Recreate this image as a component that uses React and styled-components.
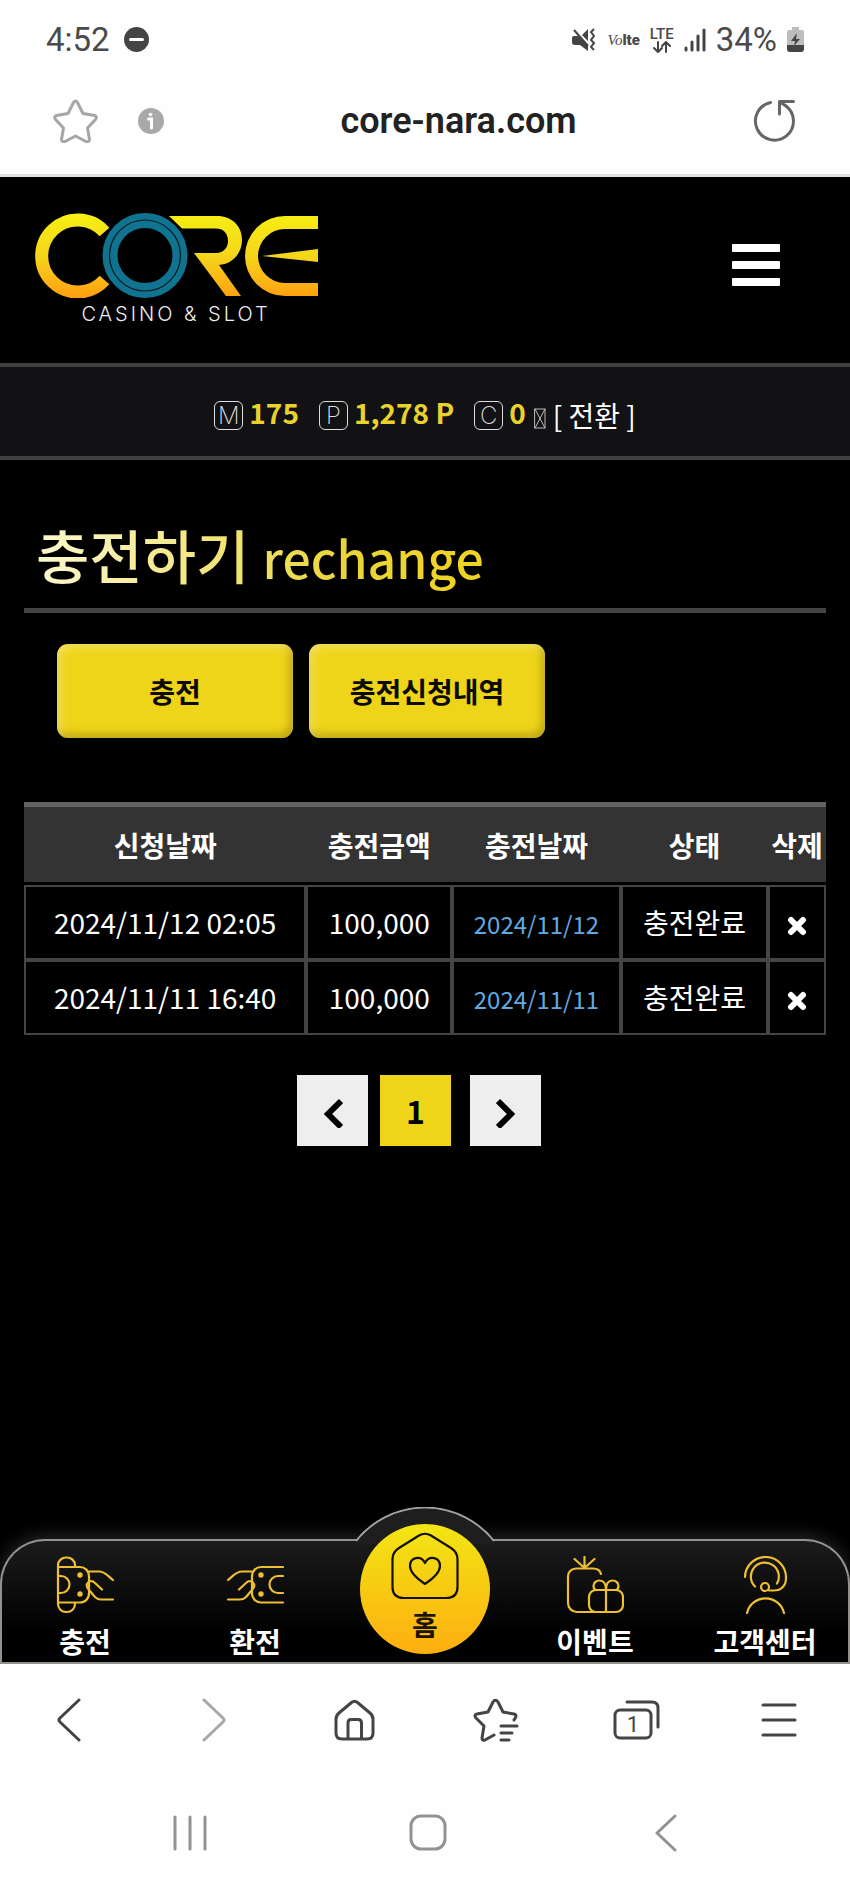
/* RechargeHistoryPage — 충전 신청내역. 모바일 브라우저 틀 안에
   사이트 헤더, 보유 금액 바, 신청내역 표, 하단 메뉴를 그린다. */

import React from "react";
import styled, { createGlobalStyle, css } from "styled-components";

const GlobalStyle = createGlobalStyle`
  * {
    box-sizing: border-box;
  }

  body {
    margin: 0;
    background: #000;
    font-family: "Noto Sans CJK KR", "Noto Sans", sans-serif;
  }

  button {
    margin: 0;
    padding: 0;
    border: none;
    background: none;
    font-family: inherit;
    cursor: pointer;
  }

  a {
    color: inherit;
    text-decoration: none;
  }

  svg {
    display: block;
  }
`;

const Screen = styled.div`
  min-height: 100vh;
  display: flex;
  flex-direction: column;
  background: #000;
`;

/* ---------- 상태바 / 주소창 ---------- */

const StatusBar = styled.div`
  height: 79px;
  padding: 0 46px;
  display: flex;
  align-items: center;
  justify-content: space-between;
  background: #fefefe;
  color: #4a4a4a;
  font-family: Roboto, sans-serif;
`;

const StatusGroup = styled.div`
  display: flex;
  align-items: center;
  gap: ${({ $gap }) => $gap}px;
`;

const StatusText = styled.span`
  font-size: 33px;
  line-height: 40px;
`;

const VoLte = styled.span`
  display: flex;
  align-items: baseline;
  font-size: 15px;
  line-height: 20px;
  font-weight: 900;

  i {
    font-family: "Liberation Serif", serif;
    font-weight: 400;
  }
`;

const Lte = styled.span`
  display: flex;
  flex-direction: column;
  align-items: center;
  font-size: 15px;
  line-height: 14px;
  font-weight: 500;
`;

const AddressBar = styled.div`
  padding: 20px 53px 31px;
  display: flex;
  align-items: center;
  background: #fefefe;
  border-bottom: 3px solid #e2e2e2;
`;

const InfoButton = styled.button`
  margin-left: 40px;
`;

const Address = styled.div`
  flex: 1;
  text-align: center;
  font-family: Roboto, sans-serif;
  font-size: 36px;
  font-weight: 600;
  line-height: 41px;
  color: #222;
`;

/* ---------- 사이트 헤더 ---------- */

const Header = styled.header`
  padding: 36px 70px 39px 34px;
  display: flex;
  align-items: flex-start;
  justify-content: space-between;
`;

const Logo = styled.a`
  display: flex;
  flex-direction: column;
  align-items: center;
  gap: 6px;
`;

const LogoSub = styled.span`
  font-family: Inter, "Liberation Sans", sans-serif;
  font-size: 20px;
  font-weight: 300;
  line-height: 20px;
  letter-spacing: 3px;
  color: #eee;
`;

const MenuButton = styled.button`
  width: 48px;
  height: 42px;
  margin-top: 31px;
  display: flex;
  flex-direction: column;
  justify-content: space-between;

  span {
    width: 100%;
    height: 8px;
    border-radius: 1px;
    background: #fff;
  }
`;

const BalanceBar = styled.div`
  padding: 31px 20px 24px;
  display: flex;
  align-items: center;
  justify-content: center;
  background: #121114;
  border-top: 4px solid #3f3e41;
  border-bottom: 4px solid #3f3e41;
  line-height: 28px;
`;

const Balance = styled.div`
  display: flex;
  align-items: center;
  gap: 6px;
  margin-right: 20px;
`;

const BalanceMark = styled.span`
  width: 29px;
  height: 29px;
  border: 1px solid #ddd;
  border-radius: 6px;
  display: flex;
  align-items: center;
  justify-content: center;
  font-family: Inter, sans-serif;
  font-size: 24px;
  font-weight: 200;
  line-height: 27px;
  color: #ddd;
`;

const BalanceValue = styled.strong`
  padding-bottom: 6px;
  font-size: 28px;
  font-weight: 700;
  line-height: 28px;
  color: #ead22c;
`;

const ConvertButton = styled.button`
  margin-left: -12px;
  display: flex;
  align-items: center;
  gap: 7px;
  font-size: 28px;
  line-height: 34px;
  color: #fff;

  svg {
    margin-top: 6px;
  }
`;

/* ---------- 본문 ---------- */

const Main = styled.main`
  flex: 1;
  padding: 50px 24px 40px;
`;

const PageTitle = styled.h1`
  margin: 0;
  padding: 0 12px 10px;
  border-bottom: 5px solid #444;
  font-size: 58px;
  font-weight: 500;
  line-height: 88px;

  span {
    background: linear-gradient(to right, #fdf8d0, #ead535 70%, #efd321);
    background-clip: text;
    -webkit-background-clip: text;
    color: transparent;
  }

  small {
    font-size: 50px;
    line-height: 50px;
  }
`;

const Tabs = styled.div`
  display: flex;
  gap: 16px;
  padding: 31px 33px 0;
`;

const TabButton = styled.button`
  flex: 0 1 236px;
  height: 94px;
  border-radius: 11px;
  background: #efd51a;
  box-shadow:
    inset 3px 3px 8px rgba(255, 255, 255, 0.35),
    inset -3px -4px 8px rgba(130, 110, 0, 0.5);
  font-size: 28px;
  font-weight: 700;
  color: #0c0b02;
`;

const HistoryTable = styled.table`
  width: 100%;
  margin-top: 64px;
  border-spacing: 0;
  table-layout: fixed;
  color: #fff;
  font-size: 28px;
  line-height: 40px;
  text-align: center;
`;

const HeadCell = styled.th`
  width: ${({ $width }) => $width};
  height: 80px;
  padding: 0;
  background: #333;
  border-top: 5px solid #636363;
  font-weight: 700;
  white-space: nowrap;
`;

const HeadGap = styled.tbody`
  td {
    height: 3px;
    padding: 0;
  }
`;

const Cell = styled.td`
  height: 75px;
  padding: 0 0 2px;
  border: 2px solid #444;
  white-space: nowrap;

  ${({ $date }) =>
    $date &&
    css`
      padding: 2px 0 0;
      font-size: 24px;
      color: #62a9e0;
    `}
`;

const DeleteButton = styled.button`
  vertical-align: middle;
`;

const Pagination = styled.nav`
  margin-top: 40px;
  padding-right: 12px;
  display: flex;
  justify-content: center;
  gap: 12px;
`;

const PageButton = styled.button`
  width: 71px;
  height: 71px;
  display: flex;
  align-items: center;
  justify-content: center;
  padding-bottom: ${({ $current }) => ($current ? "2px" : "0")};
  background: ${({ $current }) => ($current ? "#efd519" : "#eee")};
  margin-right: ${({ $current }) => ($current ? "7px" : "0")};
  font-size: 32px;
  font-weight: 700;
  color: #000;
`;

/* ---------- 하단 메뉴 ---------- */

const BottomNav = styled.nav`
  position: relative;
  height: 125px;
  display: flex;
  background: linear-gradient(#1c1c1c, #000 75%);
  border-radius: 45px 45px 0 0;
  box-shadow:
    inset 0 0 0 2px #92918c,
    0 -4px 16px rgba(255, 255, 255, 0.14);
`;

const NavItem = styled.a`
  flex: 1;
  padding-top: 17px;
  display: flex;
  flex-direction: column;
  align-items: center;
  font-size: 28px;
  font-weight: 700;
  line-height: 40px;
  color: #fff;
  white-space: nowrap;

  svg {
    margin-bottom: 7px;
  }
`;

const NavCenter = styled.div`
  flex: 1;
  position: relative;
`;

const Dome = styled.svg`
  position: absolute;
  left: 50%;
  top: -32px;
  transform: translateX(-50%);
`;

const HomeLink = styled.a`
  position: absolute;
  left: 50%;
  top: -15px;
  transform: translateX(-50%);
  width: 130px;
  height: 130px;
  padding-top: 8px;
  border-radius: 50%;
  background: linear-gradient(#f2e614, #fdae10);
  display: flex;
  flex-direction: column;
  align-items: center;
  font-size: 28px;
  font-weight: 700;
  line-height: 40px;
  color: #1a1400;

  svg {
    margin-bottom: 4px;
  }
`;

/* ---------- 브라우저 도구바 / 시스템 버튼 ---------- */

const Toolbar = styled.div`
  height: 112px;
  display: grid;
  grid-template-columns: repeat(6, 1fr);
  background: #fefefe;
`;

const SystemBar = styled.div`
  height: 113px;
  padding: 0 65px 0 71px;
  display: grid;
  grid-template-columns: repeat(3, 1fr);
  background: #fefefe;
`;

const BarButton = styled.button`
  display: flex;
  align-items: center;
  justify-content: center;
`;

/* ---------- 아이콘 ---------- */

function Line({ w, h, color = "#444", width = 3, children, ...rest }) {
  return (
    <svg
      width={w}
      height={h}
      viewBox={`0 0 ${w} ${h}`}
      fill="none"
      stroke={color}
      strokeWidth={width}
      strokeLinecap="round"
      strokeLinejoin="round"
      aria-hidden="true"
      {...rest}
    >
      {children}
    </svg>
  );
}

function NavIcon({ children }) {
  return (
    <Line w={58} h={58} color="#eebf33" width={2.2}>
      {children}
    </Line>
  );
}

/* 카드를 쥔 손. 충전/환전 아이콘이 함께 쓴다. */
function CardHand() {
  return (
    <>
      <path d="M33 15.500H43C49 15.500 52 20 57 24" />
      <path d="M46 33.500L39 27C36 24 32 25 31 28C30 30.500 31 32 33 34L39 41C41 43 42 43.500 45 43.500H57" />
      <circle cx="24" cy="19" r="1.600" fill="#eebf33" />
      <circle cx="24" cy="38" r="1.600" fill="#eebf33" />
    </>
  );
}

function ChargeIcon() {
  return (
    <NavIcon>
      <path d="M19 10V9A8 8 0 0 0 11 1.500H10A8 8 0 0 0 2 9V48A8 8 0 0 0 10 56H11A8 8 0 0 0 19 48V47" />
      <path d="M2 11H24A9 9 0 0 1 33 20V37A9 9 0 0 1 24 46.500H2" />
      <path d="M2 20H5A8.500 8.500 0 0 1 5 37H2" />
      <CardHand />
    </NavIcon>
  );
}

function WithdrawIcon() {
  return (
    <NavIcon>
      <g transform="translate(59 0) scale(-1 1)">
        <path d="M2 11H24A9 9 0 0 1 33 20V37A9 9 0 0 1 24 46.500H2" />
        <path d="M2 20H7A8.500 8.500 0 0 1 7 37H2" />
        <CardHand />
      </g>
    </NavIcon>
  );
}

function EventIcon() {
  return (
    <NavIcon>
      <path d="M35 18C34 14 31 12.500 27 12.500H10A8 8 0 0 0 2 20.500V47A9 9 0 0 0 11 56H30" />
      <path d="M18.500 1V12L8.500 3M18.500 12L28.500 3" />
      <rect x="23" y="34" width="34" height="22" rx="7" />
      <path d="M40 34V56" />
      <path d="M40 34C40 27 37 24.500 33.500 24.500C30 24.500 27.500 27 27.500 30C27.500 32 28.500 33.500 30 34" />
      <path d="M40 34C40 27 43 24.500 46.500 24.500C50 24.500 52.500 27 52.500 30C52.500 32 51.500 33.500 50 34" />
    </NavIcon>
  );
}

function SupportIcon() {
  return (
    <NavIcon>
      <path d="M9 21A20.500 20.500 0 0 1 50 22C50 30 45 34.500 38 34.500H33" />
      <path d="M19 30.500A14 14 0 1 1 41 27.500" />
      <circle cx="29" cy="31" r="4" />
      <path d="M11 57A19 19 0 0 1 48 57" />
    </NavIcon>
  );
}

function CoreLogo() {
  return (
    <svg width="284" height="85" viewBox="35 213 284 85" role="img" aria-label="CORE">
      <defs>
        <linearGradient id="gold" gradientUnits="userSpaceOnUse" x1="0" y1="214" x2="0" y2="298">
          <stop offset="0" stopColor="#f6ee12" />
          <stop offset="0.5" stopColor="#f5d51c" />
          <stop offset="1" stopColor="#ff9f10" />
        </linearGradient>
      </defs>
      <path d="M105.500 232A36 36 0 1 0 105.500 280" fill="none" stroke="url(#gold)" strokeWidth="13" />
      <path
        fill="url(#gold)"
        d="M170 216H218C233 216 243 226 243 240C243 254 233 264 220 265L242 296H227L195 253H217C225 253 229 247 229 241C229 233 224 228.500 217 228.500H183Z"
      />
      <path
        fill="url(#gold)"
        d="M319 216H286A40 40 0 0 0 286 296H319V283H286A27 27 0 0 1 286 229H319Z"
      />
      <path fill="url(#gold)" d="M319 249L263 256L319 262Z" />
      <circle cx="146" cy="255.500" r="44" fill="#000" />
      <circle cx="146" cy="255.500" r="35" fill="none" stroke="#107490" strokeWidth="15" />
      <circle cx="146" cy="255.500" r="35.500" fill="none" stroke="#03181f" strokeWidth="1.200" />
    </svg>
  );
}

/* ---------- 데이터 ---------- */

const COLUMNS = [
  { label: "신청날짜", width: "35.2%" },
  { label: "충전금액", width: "18.2%" },
  { label: "충전날짜", width: "21%" },
  { label: "상태", width: "18.4%" },
  { label: "삭제", width: "7.2%" },
];

const HISTORY = [
  { requestedAt: "2024/11/12 02:05", amount: "100,000", chargedAt: "2024/11/12", state: "충전완료" },
  { requestedAt: "2024/11/11 16:40", amount: "100,000", chargedAt: "2024/11/11", state: "충전완료" },
];

const BALANCES = [
  { mark: "M", value: "175" },
  { mark: "P", value: "1,278 P" },
  { mark: "C", value: "0" },
];

function PhoneTop() {
  return (
    <>
      <StatusBar>
        <StatusGroup $gap={14}>
          <StatusText>4:52</StatusText>
          <svg width="25" height="25" viewBox="0 0 25 25" aria-hidden="true">
            <circle cx="12.500" cy="12.500" r="12.500" fill="#444" />
            <path d="M6.500 12.500H18.500" stroke="#fff" strokeWidth="3" strokeLinecap="round" />
          </svg>
        </StatusGroup>
        <StatusGroup $gap={10}>
          <svg width="25" height="24" viewBox="0 0 25 24" aria-hidden="true">
            <path d="M2 8H6L16 17V23L8 17H3Q0 17 0 14V10Q0 8 2 8ZM10 7L16 1V13Z" fill="#444" />
            <path d="M2 2L16 18" stroke="#444" strokeWidth="2" />
            <path
              d="M22 1L19 4L22 8L19 12L22 15L19 19L22 22"
              fill="none"
              stroke="#444"
              strokeWidth="2"
            />
          </svg>
          <VoLte>
            <i>Vo</i>lte
          </VoLte>
          <Lte>
            LTE
            <Line w={18} h={12} width={2}>
              <path d="M5 1V11M1 7L5 11L9 7M13 11V1M9 5L13 1L17 5" />
            </Line>
          </Lte>
          <Line w={22} h={24} width={3}>
            <path d="M2 20V22M8 14V22M14 8V22M20 2V22" />
          </Line>
          <StatusText>34%</StatusText>
          <svg width="17" height="25" viewBox="0 0 17 25" aria-hidden="true">
            <path d="M5 0H12V3H15Q17 3 17 5V18H0V5Q0 3 2 3H5Z" fill="#bdbdbd" />
            <path d="M0 18H17V22Q17 25 14 25H3Q0 25 0 22Z" fill="#444" />
            <path d="M10 6L4 14H8L7 19L13 12H9Z" fill="#444" />
          </svg>
        </StatusGroup>
      </StatusBar>
      <AddressBar>
        <button type="button" aria-label="즐겨찾기">
          <Line w={45} h={44} color="#a6a6a6">
            <path d="M20.500 3.500Q22.500 0.500 24.500 3.500L30 14.500L41.500 16.500Q44.500 17.500 42.500 20.500L34.500 29L36.500 40.500Q36 43.500 33 42.500L22.500 37L12 42.500Q9 43.500 8.500 40.500L10.500 29L2.500 20.500Q0.500 17.500 3.500 16.500L15 14.500Z" />
          </Line>
        </button>
        <InfoButton type="button" aria-label="사이트 정보">
          <svg width="26" height="26" viewBox="0 0 26 26" aria-hidden="true">
            <circle cx="13" cy="13" r="13" fill="#a9a9a9" />
            <circle cx="12.500" cy="6.500" r="1.800" fill="#fff" />
            <path d="M10.500 11H13.500V20" fill="none" stroke="#fff" strokeWidth="3" strokeLinecap="round" />
          </svg>
        </InfoButton>
        <Address>core-nara.com</Address>
        <button type="button" aria-label="새로고침">
          <Line w={44} h={44} color="#666">
            <path d="M17.500 3.500A19 19 0 1 0 33 7" />
            <path d="M40.500 2.500H26.500V15" />
            <path d="M27 3L33 7" />
          </Line>
        </button>
      </AddressBar>
    </>
  );
}

function SiteMenu() {
  return (
    <BottomNav>
      <NavItem href="#charge">
        <ChargeIcon />
        충전
      </NavItem>
      <NavItem href="#withdraw">
        <WithdrawIcon />
        환전
      </NavItem>
      <NavCenter>
        <Dome width="140" height="37" viewBox="0 0 140 37" aria-hidden="true">
          <path d="M1 35A88 88 0 0 1 139 35V37H1Z" fill="#1e1e1e" />
          <path d="M1 34A88 88 0 0 1 139 34" fill="none" stroke="#a2a2a2" strokeWidth="2" />
        </Dome>
        <HomeLink href="#home">
          <Line w={68} h={68} color="#141000" width={2.2}>
            <path d="M28 3.500Q34 0 40 3.500L60 16Q66.500 20 66.500 27V55Q66.500 66 55.500 66H12.500Q1.500 66 1.500 55V27Q1.500 20 8 16Z" />
            <path d="M34 52Q19 42 19 34C19 25 30 23 34 31C38 23 49 25 49 34Q49 42 34 52Z" />
          </Line>
          홈
        </HomeLink>
      </NavCenter>
      <NavItem href="#event">
        <EventIcon />
        이벤트
      </NavItem>
      <NavItem href="#support">
        <SupportIcon />
        고객센터
      </NavItem>
    </BottomNav>
  );
}

function PhoneBottom() {
  return (
    <>
      <Toolbar>
        <BarButton type="button" aria-label="뒤로">
          <Line w={30} h={44}>
            <path d="M23 2L4 20Q2 22 4 24L23 42" />
          </Line>
        </BarButton>
        <BarButton type="button" aria-label="앞으로">
          <Line w={28} h={44} color="#a8a8a8">
            <path d="M6 2L25 20Q27 22 25 24L6 42" />
          </Line>
        </BarButton>
        <BarButton type="button" aria-label="홈">
          <Line w={41} h={42}>
            <path d="M17.500 3.500Q20.500 1 23.500 3.500L36 14Q39 16.500 39 20V34Q39 40 33 40H8Q2 40 2 34V20Q2 16.500 5 14Z" />
            <path d="M14 39V24Q14 20.500 17 20.500H24Q27.500 20.500 27.500 24V39" />
          </Line>
        </BarButton>
        <BarButton type="button" aria-label="북마크">
          <Line w={46} h={44}>
            <path d="M21 37L12 42Q9 43 9 40L11 28L3 20Q0.500 17 4 16L15 14L20 4Q22.500 0.500 25 4L30 14L41 16Q45 17 41 22" />
            <path d="M28 28H44M28 35H39M28 42H36" />
          </Line>
        </BarButton>
        <BarButton type="button" aria-label="탭 1개">
          <Line w={48} h={42}>
            <rect x="2" y="11" width="36" height="28" rx="5" />
            <path d="M14 3H39Q45 3 45 9V28" />
            <text
              x="20"
              y="33"
              textAnchor="middle"
              fontFamily="Roboto, sans-serif"
              fontSize="22"
              fill="#444"
              stroke="none"
            >
              1
            </text>
          </Line>
        </BarButton>
        <BarButton type="button" aria-label="메뉴">
          <Line w={38} h={36}>
            <path d="M3 3H35M3 18H35M3 33H35" />
          </Line>
        </BarButton>
      </Toolbar>
      <SystemBar>
        <BarButton type="button" aria-label="최근 앱">
          <Line w={34} h={36} color="#929292">
            <path d="M2 2V34M17 2V34M32 2V34" />
          </Line>
        </BarButton>
        <BarButton type="button" aria-label="홈 화면">
          <Line w={38} h={37} color="#929292">
            <rect x="2" y="2" width="34" height="33" rx="10" />
          </Line>
        </BarButton>
        <BarButton type="button" aria-label="이전">
          <Line w={22} h={38} color="#929292">
            <path d="M20 2L2 19L20 36" />
          </Line>
        </BarButton>
      </SystemBar>
    </>
  );
}

function App() {
  const [rows, setRows] = React.useState(HISTORY);

  function removeRow(target) {
    setRows((prev) => prev.filter((row) => row !== target));
  }

  return (
    <Screen>
      <GlobalStyle />
      <PhoneTop />

      <Header>
        <Logo href="#main">
          <CoreLogo />
          <LogoSub>CASINO &amp; SLOT</LogoSub>
        </Logo>
        <MenuButton type="button" aria-label="전체 메뉴">
          <span />
          <span />
          <span />
        </MenuButton>
      </Header>

      <BalanceBar>
        {BALANCES.map((item) => (
          <Balance key={item.mark}>
            <BalanceMark>{item.mark}</BalanceMark>
            <BalanceValue>{item.value}</BalanceValue>
          </Balance>
        ))}
        <ConvertButton type="button">
          <Line w={12} h={21} color="#bbb" width={1}>
            <path d="M1 1H11V20H1ZM1 1L11 20M11 1L1 20" />
          </Line>
          [ 전환 ]
        </ConvertButton>
      </BalanceBar>

      <Main>
        <PageTitle>
          <span>
            충전하기 <small>rechange</small>
          </span>
        </PageTitle>

        <Tabs>
          <TabButton type="button">충전</TabButton>
          <TabButton type="button">충전신청내역</TabButton>
        </Tabs>

        <HistoryTable>
          <thead>
            <tr>
              {COLUMNS.map((col) => (
                <HeadCell key={col.label} $width={col.width} scope="col">
                  {col.label}
                </HeadCell>
              ))}
            </tr>
          </thead>
          <HeadGap aria-hidden="true">
            <tr>
              <td colSpan={5} />
            </tr>
          </HeadGap>
          <tbody>
            {rows.map((row) => (
              <tr key={row.requestedAt}>
                <Cell>{row.requestedAt}</Cell>
                <Cell>{row.amount}</Cell>
                <Cell $date>{row.chargedAt}</Cell>
                <Cell>{row.state}</Cell>
                <Cell>
                  <DeleteButton type="button" aria-label="삭제" onClick={() => removeRow(row)}>
                    <Line w={20} h={20} color="#fff" width={6}>
                      <path d="M4 4L16 16M16 4L4 16" />
                    </Line>
                  </DeleteButton>
                </Cell>
              </tr>
            ))}
          </tbody>
        </HistoryTable>

        <Pagination aria-label="페이지">
          <PageButton type="button" aria-label="이전 페이지">
            <Line w={20} h={34} color="#000" width={6} strokeLinecap="butt" strokeLinejoin="miter">
              <path d="M18 7L5 20L18 33" />
            </Line>
          </PageButton>
          <PageButton type="button" $current>
            1
          </PageButton>
          <PageButton type="button" aria-label="다음 페이지">
            <Line w={20} h={34} color="#000" width={6} strokeLinecap="butt" strokeLinejoin="miter">
              <path d="M2 7L15 20L2 33" />
            </Line>
          </PageButton>
        </Pagination>
      </Main>

      <SiteMenu />
      <PhoneBottom />
    </Screen>
  );
}

export default App;
